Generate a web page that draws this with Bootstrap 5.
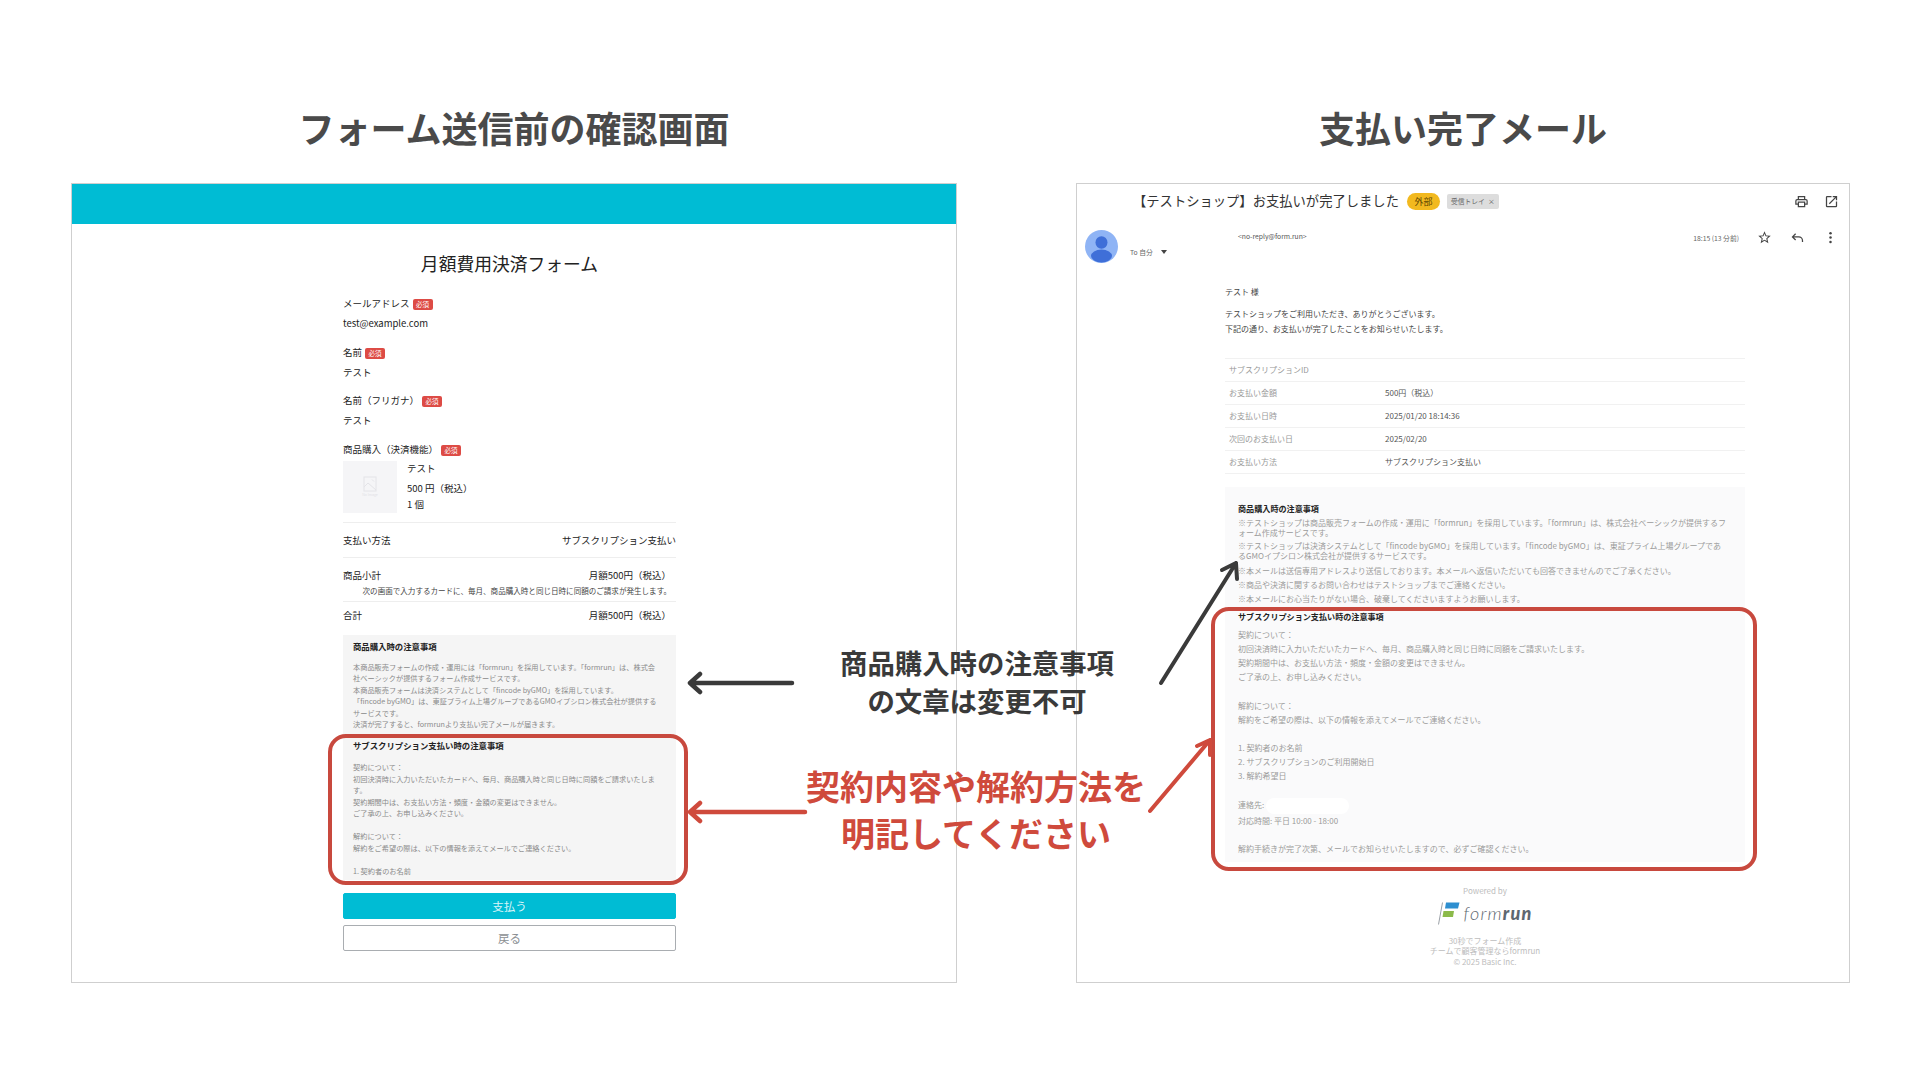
<!DOCTYPE html>
<html lang="ja">
<head>
  <meta charset="UTF-8">
  <title>フォーム送信前の確認画面</title>
  <link href="https://cdn.jsdelivr.net/npm/bootstrap@5.3.3/dist/css/bootstrap.min.css" rel="stylesheet">
  <style>
    body { background: #fff; font-family: "Noto Sans CJK JP", "Noto Sans", sans-serif; color: #222; overflow: hidden; }
    .slide { position: relative; width: 1920px; height: 1080px; padding: 105px 0 0 71px; gap: 119px; }
    .slide-head { font-size: 36px; line-height: 44px; font-weight: 700; color: #4a4a4a; margin: 0 0 34px; text-align: center; }
    .shot { height: 800px; border: 1px solid #cfcfcf; overflow: hidden; }

    /* left: form */
    .col-form { width: 886px; }
    .form-band { height: 40px; background: #00bcd4; }
    .form-body { width: 333px; margin-left: 271px; font-size: 9.5px; line-height: 16px; }
    .form-title { font-size: 17.8px; line-height: 24px; text-align: center; font-weight: 400; margin: 27px 0 20px; }
    .form-field { height: 48.5px; }
    .form-field p { margin: 4px 0 0; }
    .req-tag { display: inline-block; width: 20px; height: 11px; padding: 0; margin-left: 3px; border-radius: 2px; background: #dd4b45; color: #fff; font-size: 6.5px; line-height: 11px; font-weight: 400; vertical-align: 0; }
    .item-thumb { width: 54px; height: 52px; background: #f5f5f7; color: #e2e2e6; font-size: 3.5px; line-height: 5px; }
    .item-info { margin-left: 10px; margin-top: -1px; }
    .item-info div:nth-child(2) { margin: 4px 0 0; }
    .sum-rule { border-top: 1px solid #eee; margin-top: 9px; padding-top: 9px; }
    .sum-rule-total { margin-top: 4px; padding-top: 5px; }
    .sum-val { padding-right: 5px; }
    .sum-small { font-size: 7.55px; line-height: 12px; text-align: right; padding: 2px 5px 0 0; color: #444; }
    .note-panel { background: #f5f5f5; padding: 3px 10px 3px; margin-top: 12px; }
    .note-h { font-size: 8.4px; line-height: 16px; font-weight: 700; color: #222; }
    .note-txt { font-size: 7.2px; line-height: 11.5px; color: #8a8a8a; margin: 8px 0 0; }
    .note-sub { position: relative; height: 140px; margin-top: 6px; }
    .note-sub .note-txt { margin-top: 9.5px; }
    .red-frame { position: absolute; border: 4px solid #c8493e; border-radius: 18px; pointer-events: none; }
    .note-sub .red-frame { left: -25px; right: -22px; top: -3px; bottom: -8px; }
    .pay-btn, .back-btn { display: block; width: 100%; height: 26px; padding: 0; font-size: 11.5px; line-height: 24px; border-radius: 2px; }
    .pay-btn { background: #00bcd4; border: 1px solid #00bcd4; color: #d8f5f9; margin-top: 13px; }
    .back-btn { background: #fff; border: 1px solid #a9adb1; color: #8b8f93; margin-top: 6px; }

    /* right: mail */
    .col-mail { width: 774px; }
    .mail-subject { height: 34px; padding: 0 10px 0 56px; font-size: 13.3px; line-height: 34px; color: #333; }
    .mail-icons { gap: 15px; }
    .ext-tag { background: #f2b91f; color: #5a4300; font-size: 9px; line-height: 17px; width: 33px; border-radius: 9px; text-align: center; margin-left: 8px; }
    .inbox-tag { background: #ddd; color: #666; font-size: 6.8px; line-height: 15px; padding: 0 4px; border-radius: 2px; margin-left: 7px; }
    .mail-from { height: 66px; padding: 12px 11px 0 8px; }
    .from-addr { font-size: 6.8px; line-height: 12px; color: #555; margin: 0 0 0 120px; }
    .from-to { font-size: 6.8px; line-height: 12px; color: #666; margin: 4px 0 0 12px; }
    .to-caret { display: inline-block; width: 0; height: 0; margin-left: 8px; border: 3px solid transparent; border-top: 4px solid #444; border-bottom: 0; vertical-align: 1px; }
    .from-right { gap: 18px; }
    .from-time { font-size: 6.8px; line-height: 12px; color: #666; margin-top: 2px; }
    .mail-body { width: 520px; margin-left: 148px; font-size: 8px; line-height: 15px; color: #444; }
    .mail-body p { margin: 0; }
    .mail-hello { margin-bottom: 7px !important; }
    .mail-tbl { margin: 22px 0 13px; border-top: 1px solid #f1f1f1; }
    .mail-tbl > div { height: 23px; line-height: 22px; border-bottom: 1px solid #f1f1f1; }
    .mail-tbl span:first-child { width: 160px; padding-left: 4px; color: #999; }
    .mail-tbl span:last-child { color: #555; }
    .mail-notes { background: #fafafb; padding: 15px 13px 0; height: 375px; }
    .mail-notes .note-h { font-size: 8.1px; line-height: 14px; }
    .note-h-gap { margin-bottom: 2px; }
    .mail-h2 { position: relative; margin-top: 3px; }
    .mail-h2 .red-frame { left: -27px; right: -25px; top: -3px; bottom: -15px; }
    .mail-line { font-size: 8px; color: #9a9a9a; line-height: 14.2px; }
    .mail-wrap { font-size: 8px; color: #9a9a9a; line-height: 10px; margin-bottom: 3px; }
    .mail-gap { height: 14.1px; }
    .addr-mask { display: inline-block; width: 83px; height: 16px; border-radius: 8px; background: #fff; vertical-align: middle; }
    .mail-foot { text-align: center; font-size: 8px; color: #bdbdbd; line-height: 10.5px; margin-top: 24px; }
    .foot-brand { height: 34px; gap: 4px; margin-bottom: 5px; }
    .brand-word { font-family: "Lato", sans-serif; font-size: 18px; font-style: italic; font-weight: 300; color: #5d6770; letter-spacing: 1.2px; }
    .brand-word b { font-weight: 900; }

    /* annotations over the two shots */
    .arrow-layer { position: absolute; left: 0; top: 0; }
    .callout { position: absolute; text-align: center; white-space: nowrap; }
    .callout-dark { left: 777px; top: 643px; width: 400px; font-size: 27.4px; line-height: 38px; font-weight: 700; color: #3a3a3a; }
    .callout-red { left: 776px; top: 762px; width: 400px; font-size: 34px; line-height: 47px; font-weight: 700; color: #cf4a3c; }
  </style>
</head>
<body>
  <div class="slide d-flex">
    <div class="col-form">
      <h2 class="slide-head">フォーム送信前の確認画面</h2>
      <div class="shot">
        <div class="form-band"></div>
        <div class="form-body">
          <h3 class="form-title">月額費用決済フォーム</h3>
          <div class="form-field">メールアドレス<span class="badge req-tag">必須</span><p>test@example.com</p></div>
          <div class="form-field">名前<span class="badge req-tag">必須</span><p>テスト</p></div>
          <div class="form-field">名前（フリガナ）<span class="badge req-tag">必須</span><p>テスト</p></div>
          <div>商品購入（決済機能）<span class="badge req-tag">必須</span></div>
          <div class="d-flex mt-1">
            <div class="item-thumb d-flex flex-column align-items-center justify-content-center">
              <svg width="14" height="16" viewBox="0 0 14 16" fill="none" stroke="#e4e4e8" stroke-width="1"><rect x="1" y="1" width="12" height="14"/><path d="M1 11l4-4 8 7M9 3.5l2 2"/></svg>
              <span>No Image</span>
            </div>
            <div class="item-info"><div>テスト</div><div>500 円（税込）</div><div>1 個</div></div>
          </div>
          <div class="sum-rule d-flex justify-content-between"><span>支払い方法</span><span>サブスクリプション支払い</span></div>
          <div class="sum-rule"><div class="d-flex justify-content-between"><span>商品小計</span><span class="sum-val">月額500円（税込）</span></div>
            <div class="sum-small">次の画面で入力するカードに、毎月、商品購入時と同じ日時に同額のご請求が発生します。</div></div>
          <div class="sum-rule sum-rule-total d-flex justify-content-between"><span>合計</span><span class="sum-val">月額500円（税込）</span></div>
          <div class="note-panel">
            <div class="note-h">商品購入時の注意事項</div>
            <p class="note-txt">本商品販売フォームの作成・運用には「formrun」を採用しています。「formrun」は、株式会<br>社ベーシックが提供するフォーム作成サービスです。<br>本商品販売フォームは決済システムとして「fincode byGMO」を採用しています。<br>「fincode byGMO」は、東証プライム上場グループであるGMOイプシロン株式会社が提供する<br>サービスです。<br>決済が完了すると、formrunより支払い完了メールが届きます。</p>
            <div class="note-sub">
              <div class="note-h">サブスクリプション支払い時の注意事項</div>
              <p class="note-txt">契約について：<br>初回決済時に入力いただいたカードへ、毎月、商品購入時と同じ日時に同額をご請求いたしま<br>す。<br>契約期間中は、お支払い方法・頻度・金額の変更はできません。<br>ご了承の上、お申し込みください。<br><br>解約について：<br>解約をご希望の際は、以下の情報を添えてメールでご連絡ください。<br><br>1. 契約者のお名前</p>
              <div class="red-frame"></div>
            </div>
          </div>
          <button class="btn pay-btn">支払う</button>
          <button class="btn back-btn">戻る</button>
        </div>
      </div>
    </div>

    <div class="col-mail">
      <h2 class="slide-head">支払い完了メール</h2>
      <div class="shot">
        <div class="mail-subject d-flex align-items-center">
          <span>【テストショップ】お支払いが完了しました</span>
          <span class="ext-tag">外部</span>
          <span class="inbox-tag">受信トレイ&nbsp;&nbsp;×</span>
          <span class="mail-icons ms-auto d-flex">
            <svg width="15" height="15" viewBox="0 0 24 24" fill="#444"><path d="M19 8h-1V3H6v5H5a3 3 0 0 0-3 3v6h4v4h12v-4h4v-6a3 3 0 0 0-3-3zM8 5h8v3H8V5zm8 14H8v-5h8v5zm4-4h-2v-3H6v3H4v-4a1 1 0 0 1 1-1h14a1 1 0 0 1 1 1v4z"/></svg>
            <svg width="15" height="15" viewBox="0 0 24 24" fill="#444"><path d="M19 19H5V5h7V3H5a2 2 0 0 0-2 2v14a2 2 0 0 0 2 2h14a2 2 0 0 0 2-2v-7h-2v7zM14 3v2h3.600l-9.800 9.800 1.400 1.400L19 6.400V10h2V3h-7z"/></svg>
          </span>
        </div>
        <div class="mail-from d-flex align-items-start">
          <svg width="33" height="33" viewBox="0 0 33 33"><circle cx="16.500" cy="16.500" r="16.500" fill="#8fb4f5"/><ellipse cx="16.500" cy="12.500" rx="6" ry="6.200" fill="#3f6fd8"/><ellipse cx="16.500" cy="26" rx="10.500" ry="6.500" fill="#3f6fd8"/></svg>
          <div class="flex-grow-1">
            <div class="from-addr">&lt;no-reply@form.run&gt;</div>
            <div class="from-to">To 自分<span class="to-caret"></span></div>
          </div>
          <div class="from-right d-flex align-items-start">
            <span class="from-time">18:15 (13 分前)</span>
            <svg width="15" height="15" viewBox="0 0 24 24" fill="#444"><path d="M22 9.200l-7.200-.6L12 2 9.200 8.600 2 9.200l5.500 4.700L5.800 21 12 17.300 18.200 21l-1.600-7.100L22 9.200zm-10 6.200l-3.800 2.300 1-4.300-3.300-2.900 4.400-.4L12 6.100l1.700 4 4.400.4-3.300 2.900 1 4.300-3.800-2.300z"/></svg>
            <svg width="15" height="15" viewBox="0 0 24 24" fill="none" stroke="#444" stroke-width="2"><path d="M9 6l-5 5 5 5M4 11h10a6 6 0 0 1 6 6v2"/></svg>
            <svg width="15" height="15" viewBox="0 0 24 24" fill="#444"><circle cx="12" cy="5" r="2"/><circle cx="12" cy="12" r="2"/><circle cx="12" cy="19" r="2"/></svg>
          </div>
        </div>
        <div class="mail-body">
          <p class="mail-hello">テスト 様</p>
          <p>テストショップをご利用いただき、ありがとうございます。</p>
          <p>下記の通り、お支払いが完了したことをお知らせいたします。</p>
          <div class="mail-tbl">
            <div class="d-flex"><span>サブスクリプションID</span><span></span></div>
            <div class="d-flex"><span>お支払い金額</span><span>500円（税込）</span></div>
            <div class="d-flex"><span>お支払い日時</span><span>2025/01/20 18:14:36</span></div>
            <div class="d-flex"><span>次回のお支払い日</span><span>2025/02/20</span></div>
            <div class="d-flex"><span>お支払い方法</span><span>サブスクリプション支払い</span></div>
          </div>
          <div class="mail-notes">
            <div class="note-h note-h-gap">商品購入時の注意事項</div>
            <div class="mail-wrap">※テストショップは商品販売フォームの作成・運用に「formrun」を採用しています。「formrun」は、株式会社ベーシックが提供するフ<br>ォーム作成サービスです。</div>
            <div class="mail-wrap">※テストショップは決済システムとして「fincode byGMO」を採用しています。「fincode byGMO」は、東証プライム上場グループであ<br>るGMOイプシロン株式会社が提供するサービスです。</div>
            <div class="mail-line">※本メールは送信専用アドレスより送信しております。本メールへ返信いただいても回答できませんのでご了承ください。</div>
            <div class="mail-line">※商品や決済に関するお問い合わせはテストショップまでご連絡ください。</div>
            <div class="mail-line">※本メールにお心当たりがない場合、破棄してくださいますようお願いします。</div>
            <div class="mail-h2">
              <div class="note-h">サブスクリプション支払い時の注意事項</div>
              <div class="mail-line mt-1">契約について：</div>
              <div class="mail-line">初回決済時に入力いただいたカードへ、毎月、商品購入時と同じ日時に同額をご請求いたします。</div>
              <div class="mail-line">契約期間中は、お支払い方法・頻度・金額の変更はできません。</div>
              <div class="mail-line">ご了承の上、お申し込みください。</div>
              <div class="mail-gap"></div>
              <div class="mail-line">解約について：</div>
              <div class="mail-line">解約をご希望の際は、以下の情報を添えてメールでご連絡ください。</div>
              <div class="mail-gap"></div>
              <div class="mail-line">1. 契約者のお名前</div>
              <div class="mail-line">2. サブスクリプションのご利用開始日</div>
              <div class="mail-line">3. 解約希望日</div>
              <div class="mail-gap"></div>
              <div class="mail-line">連絡先: <span class="addr-mask"></span></div>
              <div class="mail-line">対応時間: 平日 10:00 - 18:00</div>
              <div class="mail-gap"></div>
              <div class="mail-line">解約手続きが完了次第、メールでお知らせいたしますので、必ずご確認ください。</div>
              <div class="red-frame"></div>
            </div>
          </div>
          <div class="mail-foot">
            <div>Powered by</div>
            <div class="foot-brand d-flex align-items-center justify-content-center">
              <svg width="22" height="23" viewBox="0 0 22 23" fill="none"><path d="M4.500 .5L.5 22.500" stroke="#9aa0a6" stroke-width="1"/><path d="M8 .5h13.500L20 6.500H7z" fill="#2e8fd0"/><path d="M5.500 9h10.500l-1 6H4.500z" fill="#8cba4a"/></svg>
              <span class="brand-word">form<b>run</b></span>
            </div>
            <div>30秒でフォーム作成</div>
            <div>チームで顧客管理ならformrun</div>
            <div>© 2025 Basic Inc.</div>
          </div>
        </div>
      </div>
    </div>

    <svg class="arrow-layer" width="1920" height="1080" viewBox="0 0 1920 1080" fill="none" stroke-width="4.500" stroke-linecap="round" stroke-linejoin="round">
      <g stroke="#3a3a3a">
        <path d="M792 683H690M700 674l-10 9 10 9"/>
        <path d="M1161 683L1236 563M1222 570l14-7 1 16" stroke-width="4"/>
      </g>
      <g stroke="#cf4a3c">
        <path d="M805 812H690M700 803l-10 9 10 9"/>
        <path d="M1150 811L1210 740M1197 746l13-6 0 15" stroke-width="4"/>
      </g>
    </svg>
    <div class="callout callout-dark">商品購入時の注意事項<br>の文章は変更不可</div>
    <div class="callout callout-red">契約内容や解約方法を<br>明記してください</div>
  </div>
  <script src="https://cdn.jsdelivr.net/npm/bootstrap@5.3.3/dist/js/bootstrap.bundle.min.js"></script>
</body>
</html>
